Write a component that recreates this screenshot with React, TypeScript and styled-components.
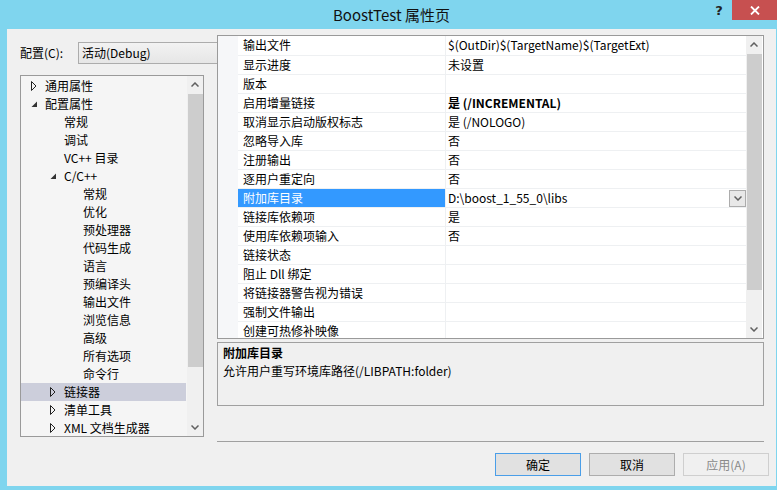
import React from "react";
import styled, { createGlobalStyle } from "styled-components";

const GlobalStyle = createGlobalStyle`
  html, body { margin: 0; padding: 0; background: #7fd5ee; }
  body {
    font-family: "Noto Sans CJK SC", "Noto Sans", sans-serif;
    font-size: 12px;
    color: #000;
  }
  * { box-sizing: border-box; }
`;

const Window = styled.div`
  width: 777px;
  height: 490px;
  background: #7fd5ee;
  display: flex;
  flex-direction: column;
  overflow: hidden;
`;

const TitleBar = styled.div`
  height: 29px;
  display: grid;
  grid-template-columns: 1fr auto 1fr;
  align-items: center;
`;

const Title = styled.div`
  grid-column: 2;
  font-size: 15px;
  color: #111;
  padding-left: 6px;
  padding-bottom: 1px;
  white-space: nowrap;
`;

const Caption = styled.div`
  grid-column: 3;
  align-self: start;
  display: flex;
  justify-content: flex-end;
`;

const HelpButton = styled.div`
  width: 26px;
  height: 20px;
  display: flex;
  align-items: center;
  justify-content: center;
  font-family: "DejaVu Sans", sans-serif;
  font-weight: bold;
  font-size: 13px;
  color: #222;
`;

const CloseButton = styled.div`
  width: 45px;
  height: 20px;
  background: #c75050;
  display: flex;
  align-items: center;
  justify-content: center;
`;

const Body = styled.div`
  flex: 1;
  margin: 0 1px 4px 7px;
  background: #f0f0f0;
  display: flex;
  flex-direction: column;
`;

const TopArea = styled.div`
  height: 408px;
  display: flex;
`;

const LeftCol = styled.div`
  width: 210px;
  padding: 13px 0 0 13px;
  display: flex;
  flex-direction: column;
`;

const ConfigRow = styled.div`
  display: flex;
  align-items: center;
  height: 22px;
`;

const ConfigLabel = styled.div`
  width: 58px;
  padding-bottom: 1px;
  white-space: nowrap;
`;

const Combo = styled.div`
  flex: 1;
  height: 22px;
  border: 1px solid #acacac;
  border-right: none;
  background: linear-gradient(#f2f2f2, #e6e6e6);
  padding: 0 0 1px 3px;
  display: flex;
  align-items: center;
  white-space: nowrap;
`;

const Tree = styled.div`
  margin-top: 11px;
  width: 184px;
  height: 362px;
  border: 1px solid #9a9a9a;
  background: #f5f5f5;
  display: flex;
`;

const TreeList = styled.div`
  flex: 1;
  padding-top: 1px;
  display: flex;
  flex-direction: column;
  overflow: hidden;
`;

const TreeItem = styled.div<{ $level: number; $selected?: boolean }>`
  height: 18px;
  flex: none;
  display: flex;
  align-items: center;
  padding-left: ${(p) => 8 + 19 * p.$level}px;
  padding-bottom: 1px;
  margin-right: 1px;
  background: ${(p) => (p.$selected ? "#cccedb" : "transparent")};
  white-space: nowrap;
`;

const ToggleSlot = styled.span`
  width: 16px;
  height: 17px;
  flex: none;
  display: flex;
  align-items: center;
  padding: 1px 0 0 2px;
`;

const ScrollBar = styled.div`
  width: 16px;
  flex: none;
  background: #f0f0f0;
  display: flex;
  flex-direction: column;
`;

const ArrowBox = styled.div`
  height: 17px;
  flex: none;
  display: flex;
  align-items: center;
  justify-content: center;
`;

const Track = styled.div`
  flex: 1;
  display: flex;
  flex-direction: column;
`;

const Thumb = styled.div<{ $h: number }>`
  height: ${(p) => p.$h}px;
  margin: 1px 0 0 1px;
  background: #cdcdcd;
`;

const RightCol = styled.div`
  width: 547px;
  padding-top: 6px;
  display: flex;
  flex-direction: column;
`;

const GridFrame = styled.div`
  height: 304px;
  border: 1px solid #9a9a9a;
  background: #fff;
  display: flex;
  overflow: hidden;
`;

const Gutter = styled.div`
  width: 20px;
  flex: none;
  background: #f6f7f9;
`;

const Rows = styled.div`
  width: 508px;
  flex: none;
  display: flex;
  flex-direction: column;
  overflow: hidden;
`;

const Row = styled.div`
  height: 19px;
  flex: none;
  display: flex;
  & + & {
    border-top: 1px solid #eef0f2;
  }
`;

const NameCell = styled.div<{ $selected?: boolean }>`
  width: 207px;
  flex: none;
  padding: 0 0 2px 5px;
  display: flex;
  align-items: center;
  white-space: nowrap;
  background: ${(p) => (p.$selected ? "#3399ff" : "transparent")};
  color: ${(p) => (p.$selected ? "#fff" : "#000")};
`;

const ValueCell = styled.div<{ $bold?: boolean }>`
  flex: 1;
  border-left: 1px solid #eef0f2;
  padding-left: 2px;
  display: flex;
  align-items: center;
  white-space: nowrap;
  font-weight: ${(p) => (p.$bold ? "bold" : "normal")};
`;

const ValueText = styled.span`
  flex: 1;
  padding-bottom: 2px;
`;

const DropButton = styled.div`
  width: 17px;
  height: 17px;
  border: 1px solid #acacac;
  background: #e8e8e8;
  display: flex;
  align-items: center;
  justify-content: center;
`;

const Description = styled.div`
  margin-top: 3px;
  height: 64px;
  border: 1px solid #a0a0a0;
  padding: 1px 5px;
  line-height: 18px;
`;

const DescTitle = styled.div`
  font-weight: bold;
`;

const Separator = styled.div`
  margin: 4px 12px 0 210px;
  height: 1px;
  background: #a0a0a0;
`;

const ButtonRow = styled.div`
  margin-top: 11px;
  padding-right: 7px;
  display: flex;
  justify-content: flex-end;
  gap: 8px;
`;

const DialogButton = styled.div<{ $default?: boolean; $disabled?: boolean }>`
  width: 86px;
  height: 23px;
  padding-bottom: 1px;
  display: flex;
  align-items: center;
  justify-content: center;
  border: 1px solid
    ${(p) => (p.$default ? "#4a9ee8" : p.$disabled ? "#cfcfcf" : "#adadad")};
  background: ${(p) => (p.$disabled ? "#f0f0f0" : "#e1e1e1")};
  color: ${(p) => (p.$disabled ? "#8a8a8a" : "#000")};
`;

const Chevron = ({ dir }: { dir: "up" | "down" }) => (
  <svg width="8" height="5" viewBox="0 0 8 5">
    <polyline
      points={dir === "up" ? "0.5,4.5 4,1 7.5,4.5" : "0.5,0.5 4,4 7.5,0.5"}
      fill="none"
      stroke="#606060"
      strokeWidth="1.5"
    />
  </svg>
);

const Collapsed = () => (
  <svg width="6" height="10" viewBox="0 0 6 10">
    <polygon points="0.5,0.5 5,5 0.5,9.5" fill="none" stroke="#222" strokeWidth="1" />
  </svg>
);

const Expanded = () => (
  <svg width="7" height="7" viewBox="0 0 7 7">
    <polygon points="6,0.5 6,6 0.5,6" fill="#333" />
  </svg>
);

type TreeNode = { label: string; level: number; toggle?: "c" | "e"; selected?: boolean };

const treeNodes: TreeNode[] = [
  { label: "通用属性", level: 0, toggle: "c" },
  { label: "配置属性", level: 0, toggle: "e" },
  { label: "常规", level: 1 },
  { label: "调试", level: 1 },
  { label: "VC++ 目录", level: 1 },
  { label: "C/C++", level: 1, toggle: "e" },
  { label: "常规", level: 2 },
  { label: "优化", level: 2 },
  { label: "预处理器", level: 2 },
  { label: "代码生成", level: 2 },
  { label: "语言", level: 2 },
  { label: "预编译头", level: 2 },
  { label: "输出文件", level: 2 },
  { label: "浏览信息", level: 2 },
  { label: "高级", level: 2 },
  { label: "所有选项", level: 2 },
  { label: "命令行", level: 2 },
  { label: "链接器", level: 1, toggle: "c", selected: true },
  { label: "清单工具", level: 1, toggle: "c" },
  { label: "XML 文档生成器", level: 1, toggle: "c" },
];

type Prop = { name: string; value: string; bold?: boolean; selected?: boolean };

const props: Prop[] = [
  { name: "输出文件", value: "$(OutDir)$(TargetName)$(TargetExt)" },
  { name: "显示进度", value: "未设置" },
  { name: "版本", value: "" },
  { name: "启用增量链接", value: "是 (/INCREMENTAL)", bold: true },
  { name: "取消显示启动版权标志", value: "是 (/NOLOGO)" },
  { name: "忽略导入库", value: "否" },
  { name: "注册输出", value: "否" },
  { name: "逐用户重定向", value: "否" },
  { name: "附加库目录", value: "D:\\boost_1_55_0\\libs", selected: true },
  { name: "链接库依赖项", value: "是" },
  { name: "使用库依赖项输入", value: "否" },
  { name: "链接状态", value: "" },
  { name: "阻止 Dll 绑定", value: "" },
  { name: "将链接器警告视为错误", value: "" },
  { name: "强制文件输出", value: "" },
  { name: "创建可热修补映像", value: "" },
];

export default function App() {
  return (
    <>
      <GlobalStyle />
      <Window>
        <TitleBar>
          <Title>BoostTest 属性页</Title>
          <Caption>
            <HelpButton>?</HelpButton>
            <CloseButton>
              <svg width="10" height="9" viewBox="0 0 10 9">
                <path d="M1 0.5 L9 8.5 M9 0.5 L1 8.5" stroke="#fff" strokeWidth="1.8" />
              </svg>
            </CloseButton>
          </Caption>
        </TitleBar>
        <Body>
          <TopArea>
            <LeftCol>
              <ConfigRow>
                <ConfigLabel>配置(C):</ConfigLabel>
                <Combo>活动(Debug)</Combo>
              </ConfigRow>
              <Tree>
                <TreeList>
                  {treeNodes.map((n, i) => (
                    <TreeItem key={i} $level={n.level} $selected={n.selected}>
                      <ToggleSlot>
                        {n.toggle === "c" && <Collapsed />}
                        {n.toggle === "e" && <Expanded />}
                      </ToggleSlot>
                      {n.label}
                    </TreeItem>
                  ))}
                </TreeList>
                <ScrollBar>
                  <ArrowBox>
                    <Chevron dir="up" />
                  </ArrowBox>
                  <Track>
                    <Thumb $h={273} />
                  </Track>
                  <ArrowBox>
                    <Chevron dir="down" />
                  </ArrowBox>
                </ScrollBar>
              </Tree>
            </LeftCol>
            <RightCol>
              <GridFrame>
                <Gutter />
                <Rows>
                  {props.map((p, i) => (
                    <Row key={i}>
                      <NameCell $selected={p.selected}>{p.name}</NameCell>
                      <ValueCell $bold={p.bold}>
                        <ValueText>{p.value}</ValueText>
                        {p.selected && (
                          <DropButton>
                            <Chevron dir="down" />
                          </DropButton>
                        )}
                      </ValueCell>
                    </Row>
                  ))}
                </Rows>
                <ScrollBar>
                  <ArrowBox>
                    <Chevron dir="up" />
                  </ArrowBox>
                  <Track>
                    <Thumb $h={236} />
                  </Track>
                  <ArrowBox>
                    <Chevron dir="down" />
                  </ArrowBox>
                </ScrollBar>
              </GridFrame>
              <Description>
                <DescTitle>附加库目录</DescTitle>
                <div>允许用户重写环境库路径(/LIBPATH:folder)</div>
              </Description>
            </RightCol>
          </TopArea>
          <Separator />
          <ButtonRow>
            <DialogButton $default>确定</DialogButton>
            <DialogButton>取消</DialogButton>
            <DialogButton $disabled>应用(A)</DialogButton>
          </ButtonRow>
        </Body>
      </Window>
    </>
  );
}
